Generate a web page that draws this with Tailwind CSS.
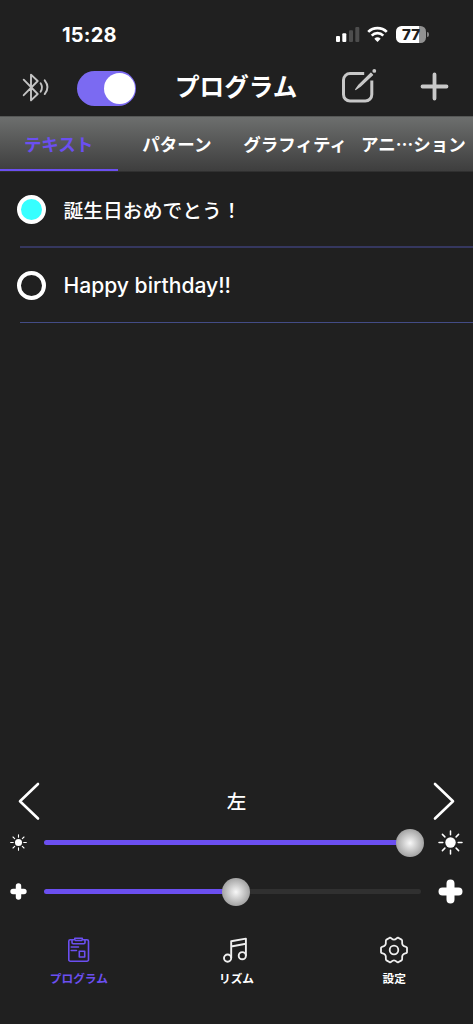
<!DOCTYPE html>
<html lang="ja">
<head>
<meta charset="utf-8">
<title>プログラム</title>
<script src="https://cdn.jsdelivr.net/npm/@tailwindcss/browser@4"></script>
</head>
<body class="bg-[#202020]">
<div class="w-[473px] h-[1024px] overflow-hidden flex flex-col bg-[#202020] text-white font-['Inter','Noto_Sans_CJK_JP',sans-serif]">
  <!-- status bar -->
  <div class="h-[60px] shrink-0 flex items-start justify-between pl-[62px] pr-[47px] pt-[23px]">
    <div class="text-[20px] leading-6 font-bold w-[56px] whitespace-nowrap tracking-[0.2px]">15:28</div>
    <div class="flex pt-[2px]">
      <svg width="24" height="18" viewBox="0 0 24 18"><g fill="#fff"><rect x="0" y="11" width="4" height="6" rx="1"/><rect x="6.3" y="8.3" width="4" height="8.7" rx="1"/></g><g fill="#4d4d4d"><rect x="13" y="5.2" width="4" height="11.8" rx="1"/><rect x="19.3" y="2" width="4" height="15" rx="1"/></g></svg>
      <svg class="ml-[7px]" width="22" height="18" viewBox="0 0 22 18" fill="none" stroke="#fff" stroke-width="2.7"><path d="M1.2 6.9a13.4 13.4 0 0 1 18.6 0"/><path d="M4.7 10.6a8.2 8.2 0 0 1 11.6 0"/><path d="M10.5 17l-3.2-3.3a4.7 4.7 0 0 1 6.4 0z" fill="#fff" stroke="none"/></svg>
      <div class="relative ml-[7px] mt-[1px] w-[30px] h-[17px] rounded-[5.5px] bg-[linear-gradient(90deg,#fff_78%,#929292_78%)] text-[#202020] text-[15px] leading-[17px] font-extrabold text-center">77<span class="absolute left-[31px] top-[6px] w-[2px] h-[5px] rounded-r-[2px] bg-[#858585]"></span></div>
    </div>
  </div>
  <!-- header -->
  <div class="h-[56px] shrink-0 flex items-start">
    <svg class="ml-[20px] mt-[12px]" width="32" height="32" viewBox="20 72 32 32" fill="none" stroke="#c4c4c4" stroke-width="1.9" stroke-linecap="round" stroke-linejoin="round"><path d="M23.7 79.7L37.7 94 31 100.4V74.6L37.7 81 23.7 95.2M40.6 83.3q2.8 4.2 0 8.4M44.7 80.3q5.6 7 0 13.8"/></svg>
    <div class="ml-[25px] mt-[11px] w-[59px] h-[34.5px] rounded-full bg-[#7b6af2] flex items-center justify-end pr-[1.5px]"><div class="size-[31px] rounded-full bg-white"></div></div>
    <div class="ml-[39px] mt-[9px] w-[125px] text-[24.6px] leading-[36px] font-bold whitespace-nowrap">プログラム</div>
    <svg class="ml-[40px] mt-[6px]" width="40" height="40" viewBox="340 66 40 40" fill="none" stroke="#c8c8c8" stroke-width="3" stroke-linecap="round"><path d="M364.2 73.6H350a6.5 6.5 0 0 0-6.5 6.5v14.4a6.5 6.5 0 0 0 6.5 6.5h15.3a6.5 6.5 0 0 0 6.5-6.5V80.5" stroke-linecap="butt"/><path d="M355.6 89.5L359 84.9 370.9 73.2 372.6 74.9 360.3 86.2z" fill="#c8c8c8" stroke-width="1.2" stroke-linejoin="round"/><path d="M374.3 70.9h.01" stroke-width="3.8"/></svg>
    <svg class="ml-[39px] mt-[11px]" width="31" height="31" viewBox="419 71 31 31" fill="none" stroke="#c8c8c8" stroke-width="3.8" stroke-linecap="round"><path d="M422.5 86.5h24M434.5 74.5v24"/></svg>
  </div>
  <!-- category tabs -->
  <div class="h-[56px] shrink-0 grid grid-cols-4 border-t border-b border-t-[#555756] border-b-[#303030] bg-linear-to-b from-[#6d6f6e] to-[#3e3e3e] text-[17.5px] leading-[55px] font-bold text-center whitespace-nowrap">
    <div class="text-[#6b4ff0] h-[54px] border-b-2 border-[#6b4ff0]"><span class="-ml-px">テキスト</span></div>
    <div class="-ml-px">パターン</div>
    <div class="-ml-px">グラフィティ</div>
    <div class="-ml-px leading-[54px] font-['Noto_Sans_CJK_JP']">アニ…ション</div>
  </div>
  <!-- program list -->
  <div class="flex flex-col h-[598px] shrink-0">
    <div class="h-[74px] flex items-center pl-[17px]"><div class="size-[29px] rounded-full border-[4px] border-white bg-[#36ffff]"></div><div class="ml-[17.5px] pt-[4px] text-[19.8px] leading-[30px] font-medium">誕生日おめでとう！</div></div>
    <div class="ml-5 h-[2px] bg-[#35375f]"></div>
    <div class="h-[74px] flex items-center pl-[17px]"><div class="size-[29px] rounded-full border-[4px] border-white"></div><div class="ml-[17.5px] pt-[1px] text-[21.1px] leading-[30px] font-medium">Happy birthday!!</div></div>
    <div class="ml-5 h-px bg-[#434c86]"></div>
  </div>
  <!-- direction -->
  <div class="h-[50px] shrink-0 flex items-center justify-between px-[17px] pt-[11px]">
    <svg width="24" height="40" viewBox="0 0 24 40" fill="none" stroke="#fff" stroke-width="2.6" stroke-linecap="round" stroke-linejoin="round"><path d="M21 3L3 20.3 21 37.5"/></svg>
    <div class="text-[19.5px] leading-[30px] font-medium pt-[3px]">左</div>
    <svg width="24" height="40" viewBox="0 0 24 40" fill="none" stroke="#fff" stroke-width="2.6" stroke-linecap="round" stroke-linejoin="round"><path d="M3 3l18 17.3L3 37.5"/></svg>
  </div>
  <!-- brightness -->
  <div class="h-[45px] shrink-0 flex items-center pl-[10px]">
    <svg width="17" height="17" viewBox="-12.5 -12.5 25 25"><circle r="5.2" fill="#fff"/><path d="M0-11.5v3.8M0 11.5V7.7M-11.5 0h3.8M11.5 0H7.7M-8.1-8.1l2.5 2.5M8.1 8.1L5.6 5.6M-8.1 8.1l2.5-2.5M8.1-8.1L5.6-5.6" stroke="#fff" stroke-width="1.6" stroke-linecap="round"/></svg>
    <div class="relative ml-[17px] w-[377px] h-[5px] rounded-full bg-[#303030]"><div class="h-full w-[366px] rounded-full bg-[#6b4ff0]"></div><div class="absolute left-[352px] top-[-11.5px] size-[28px] rounded-full bg-[radial-gradient(circle,#f8f8f8_0%,#a4a4a4_70%)]"></div></div>
    <svg class="ml-[17px]" width="25" height="25" viewBox="-12.5 -12.5 25 25"><circle r="5.2" fill="#fff"/><path d="M0-11.5v3.8M0 11.5V7.7M-11.5 0h3.8M11.5 0H7.7M-8.1-8.1l2.5 2.5M8.1 8.1L5.6 5.6M-8.1 8.1l2.5-2.5M8.1-8.1L5.6-5.6" stroke="#fff" stroke-width="1.5" stroke-linecap="round"/></svg>
  </div>
  <!-- speed -->
  <div class="h-[53px] shrink-0 flex items-center pl-[10px]">
    <svg width="17" height="17" viewBox="-12.5 -12.5 25 25"><path d="M-8 0H8M0-8V8" stroke="#fff" stroke-width="8" stroke-linecap="round"/></svg>
    <div class="relative ml-[17px] w-[377px] h-[5px] rounded-full bg-[#303030]"><div class="h-full w-[192px] rounded-full bg-[#6b4ff0]"></div><div class="absolute left-[178px] top-[-11.5px] size-[28px] rounded-full bg-[radial-gradient(circle,#f8f8f8_0%,#a4a4a4_70%)]"></div></div>
    <svg class="ml-[17px]" width="25" height="25" viewBox="-12.5 -12.5 25 25"><path d="M-8 0H8M0-8V8" stroke="#fff" stroke-width="8" stroke-linecap="round"/></svg>
  </div>
  <!-- bottom navigation -->
  <div class="grid grid-cols-3 pt-[16px] text-[11.7px] leading-[18px] font-bold text-center">
    <div class="flex flex-col items-center text-[#6b4ff0]">
      <svg width="32" height="32" viewBox="63 934 32 32" fill="none" stroke="#6b4ff0" stroke-width="1.6" stroke-linecap="round" stroke-linejoin="round"><path d="M71.5 939.7H70.3a1.5 1.5 0 0 0-1.5 1.5V959.7a1.5 1.5 0 0 0 1.5 1.5H87a1.5 1.5 0 0 0 1.5-1.5V941.2a1.5 1.5 0 0 0-1.5-1.5H85.5"/><path d="M72 939.7H74.8V938.3H82.3V939.7H85V942.5a1.2 1.2 0 0 1-1.2 1.2H73.2a1.2 1.2 0 0 1-1.2-1.2zM75.5 940.5H81.7M71.2 947H78.5M71.2 950.5H76.5M79.3 951.3H84.7V957H79.3z"/></svg>
      <div class="mt-[4px]">プログラム</div>
    </div>
    <div class="flex flex-col items-center">
      <svg width="32" height="32" viewBox="220 934 32 32" fill="none" stroke="#f0f0f0" stroke-width="1.9" stroke-linejoin="round"><circle cx="227.6" cy="958.1" r="3.6"/><circle cx="242.3" cy="955.7" r="3.6"/><path d="M231.2 958V941.3L245.9 938.6V955.7M231.2 946.5L245.9 943.8"/></svg>
      <div class="mt-[4px]">リズム</div>
    </div>
    <div class="flex flex-col items-center">
      <svg width="32" height="32" viewBox="-16 -16 32 32" fill="none" stroke="#f0f0f0" stroke-width="1.8" stroke-linejoin="round"><circle r="4.3"/><path d="M-4.2-12.3C-2.8-12.9-2.5-10.3 0-10.3S2.8-12.9 4.2-12.3L7.5-10.4C9.2-9.3 7.2-7.3 8.7-5.1S12.6-4 13-2.2V2.2C12.6 4 10.2 2.9 8.7 5.1S9.2 9.3 7.5 10.4L4.2 12.3C2.8 12.9 2.5 10.3 0 10.3S-2.8 12.9-4.2 12.3L-7.5 10.4C-9.2 9.3-7.2 7.3-8.7 5.1S-12.6 4-13 2.2V-2.2C-12.6-4-10.2-2.9-8.7-5.1S-9.2-9.3-7.5-10.4z"/></svg>
      <div class="mt-[4px]">設定</div>
    </div>
  </div>
</div>
</body>
</html>
